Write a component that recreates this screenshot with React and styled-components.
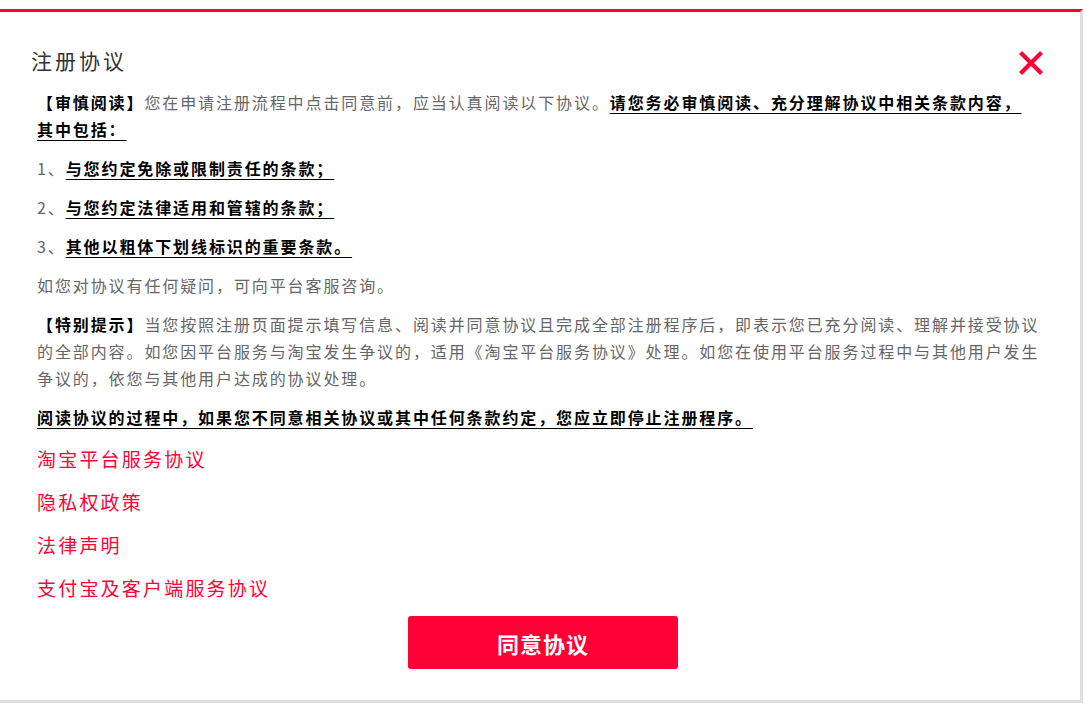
import React from "react";
import styled, { createGlobalStyle } from "styled-components";

const GlobalStyle = createGlobalStyle`
  body {
    margin: 0;
    background: #fff;
    font-family: "Noto Sans CJK SC", "Noto Sans", sans-serif;
  }
`;

const links = ["淘宝平台服务协议", "隐私权政策", "法律声明", "支付宝及客户端服务协议"];

export default function App() {
  return (
    <>
      <GlobalStyle />
      <Modal>
        <Header>
          <Title>注册协议</Title>
          <CloseButton aria-label="close">
            <svg width="24" height="24" viewBox="0 0 24 24">
              <path d="M3 3 L21 21 M21 3 L3 21" stroke="#ff0036" strokeWidth="4.2" strokeLinecap="square" />
            </svg>
          </CloseButton>
        </Header>
        <Content>
          <Para>
            <Strong plain>【审慎阅读】</Strong>您在申请注册流程中点击同意前，应当认真阅读以下协议。<Strong>请您务必审慎阅读、充分理解协议中相关条款内容，</Strong>
            <br />
            <Strong>其中包括：</Strong>
          </Para>
          <Para>
            1、<Strong>与您约定免除或限制责任的条款；</Strong>
          </Para>
          <Para>
            2、<Strong>与您约定法律适用和管辖的条款；</Strong>
          </Para>
          <Para>
            3、<Strong>其他以粗体下划线标识的重要条款。</Strong>
          </Para>
          <Para>如您对协议有任何疑问，可向平台客服咨询。</Para>
          <Para>
            <Strong plain>【特别提示】</Strong>当您按照注册页面提示填写信息、阅读并同意协议且完成全部注册程序后，即表示您已充分阅读、理解并接受协议的全部内容。如您因平台服务与淘宝发生争议的，适用《淘宝平台服务协议》处理。如您在使用平台服务过程中与其他用户发生争议的，依您与其他用户达成的协议处理。
          </Para>
          <Para>
            <Strong>阅读协议的过程中，如果您不同意相关协议或其中任何条款约定，您应立即停止注册程序。</Strong>
          </Para>
          <LinkList>
            {links.map((l) => (
              <AgreementLink key={l}>{l}</AgreementLink>
            ))}
          </LinkList>
          <Footer>
            <AgreeButton>同意协议</AgreeButton>
          </Footer>
        </Content>
      </Modal>
    </>
  );
}

const Modal = styled.div`
  box-sizing: border-box;
  margin-top: 9px;
  width: 1083px;
  height: 694px;
  background: #fff;
  border-top: 3px solid #ff0036;
  border-right: 3px solid #dedede;
  border-bottom: 3px solid #dedede;
`;

const Header = styled.div`
  display: flex;
  justify-content: space-between;
  align-items: flex-start;
  padding: 33px 37px 0 31px;
`;

const Title = styled.h2`
  margin: 0;
  font-size: 21px;
  line-height: 30px;
  font-weight: normal;
  letter-spacing: 3px;
  color: #333;
`;

const CloseButton = styled.button`
  display: flex;
  margin-top: 6px;
  padding: 0;
  border: 0;
  background: none;
  cursor: pointer;
`;

const Content = styled.div`
  padding: 14px 34px 0 37px;
`;

const Para = styled.p`
  margin: 0 0 12px;
  font-size: 16px;
  line-height: 27px;
  letter-spacing: 1.9px;
  color: #666;
`;

const Strong = styled.strong`
  font-weight: bold;
  color: #000;
  text-decoration: ${(p) => (p.plain ? "none" : "underline")};
  text-underline-offset: 4px;
  text-decoration-thickness: 1px;
`;

const LinkList = styled.div`
  display: flex;
  flex-direction: column;
  gap: 16px;
  margin-top: 14px;
`;

const AgreementLink = styled.a`
  font-size: 19px;
  line-height: 27px;
  letter-spacing: 2.2px;
  color: #ff0036;
  cursor: pointer;
`;

const Footer = styled.div`
  display: flex;
  justify-content: center;
  margin-top: 15px;
  padding-left: 3px;
`;

const AgreeButton = styled.button`
  width: 270px;
  height: 53px;
  border: 0;
  border-radius: 3px;
  background: #ff0036;
  color: #fff;
  font-family: "Noto Sans CJK SC", sans-serif;
  font-size: 22px;
  font-weight: bold;
  letter-spacing: 1px;
  cursor: pointer;
`;
